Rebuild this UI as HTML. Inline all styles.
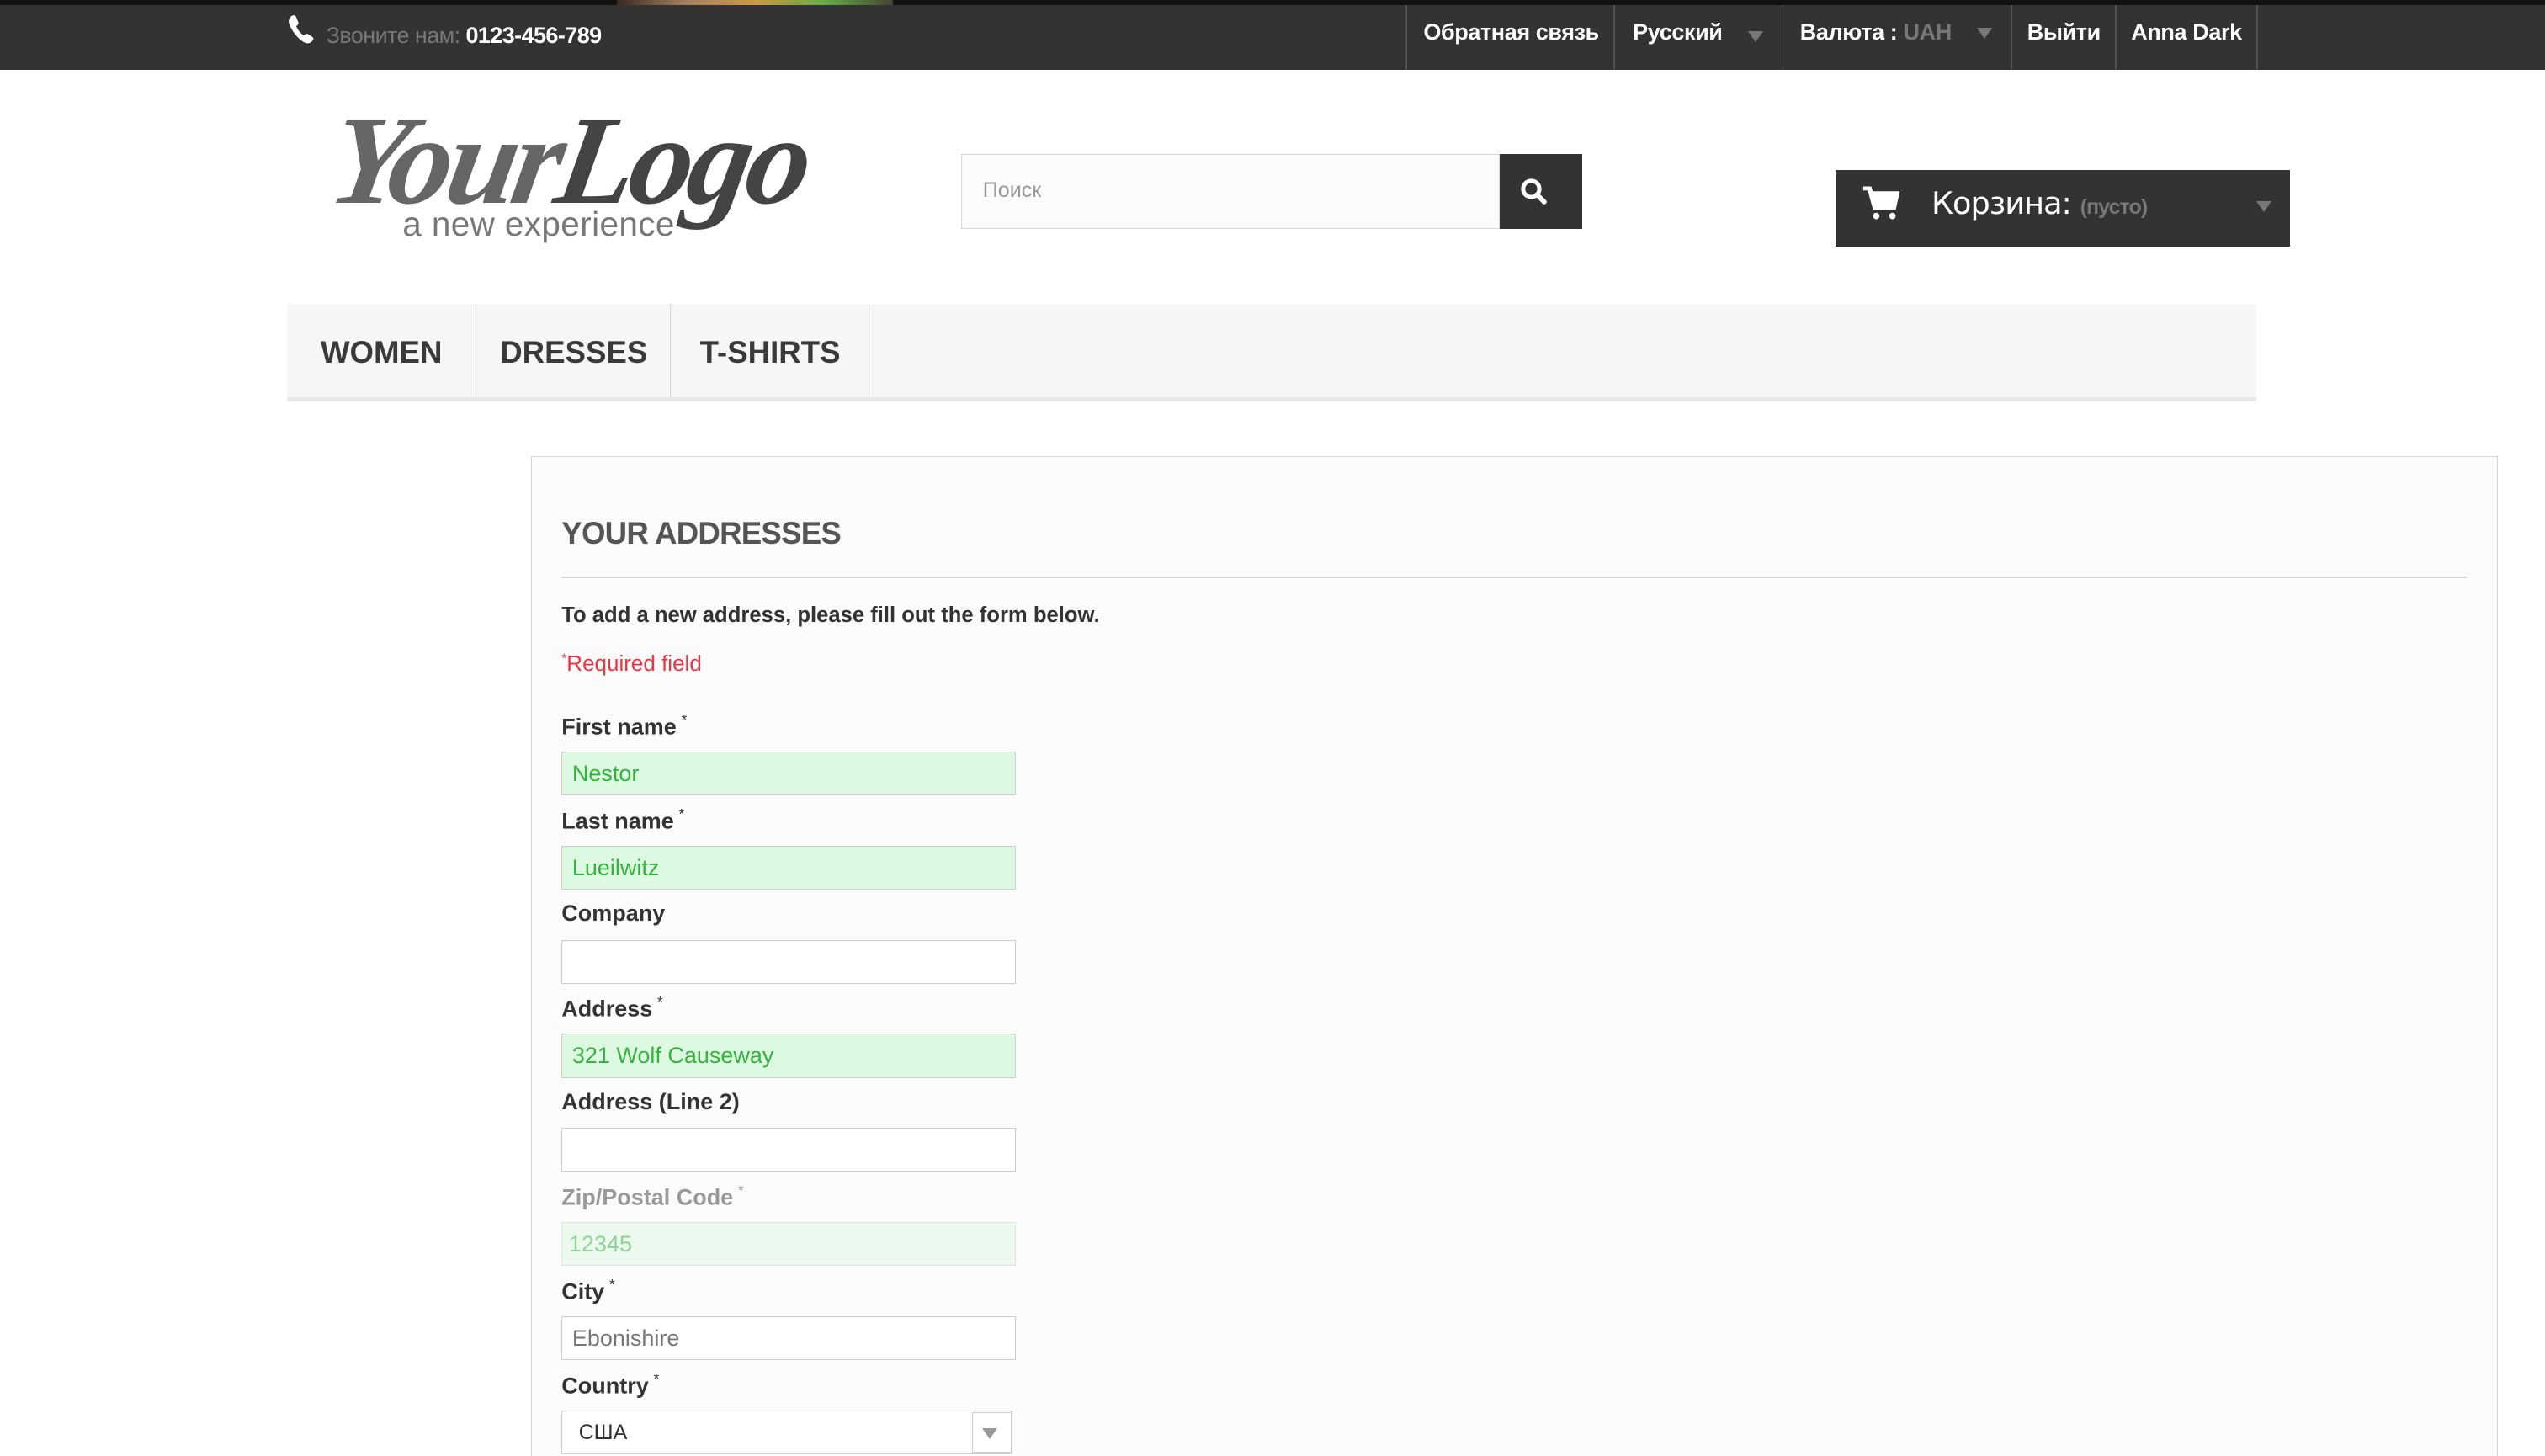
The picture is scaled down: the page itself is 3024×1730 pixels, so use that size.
<!DOCTYPE html>
<html><head><meta charset="utf-8"><style>
html,body{margin:0;padding:0;background:#fff;overflow:hidden;width:3024px;height:1730px}
#w{position:relative;width:1568px;height:897px;zoom:1.928571;font-family:"Liberation Sans",Arial,sans-serif;color:#333}
.a{position:absolute}
.top{left:0;top:0;width:1568px;height:43px;background:#333}
.blk{left:0;top:0;width:1568px;height:3px;background:#111}
.sep{top:3px;width:1px;height:40px;background:#515151}
.tl{top:12px;font-size:14px;font-weight:bold;color:#fff;white-space:nowrap;letter-spacing:-.2px}
.tri{width:0;height:0;border-left:5px solid transparent;border-right:5px solid transparent;border-top:7px solid #777}
.menu{left:177px;top:187px;width:1213px;height:58px;background:#f6f6f6;border-bottom:3px solid #e9e9e9}
.mi{top:187px;height:58px;line-height:60px;font-size:19px;color:#3a3a3a;font-weight:bold;text-align:center;border-right:1px solid #d6d4d4}
.panel{left:327px;top:281px;width:1211px;height:640px;background:#fbfbfb;border:1px solid #d6d4d4}
.lab{left:346px;font-size:14px;font-weight:bold;color:#333}
.lab sup{font-size:9px;font-weight:normal;vertical-align:6px;margin-left:3px}
.in{left:346px;height:26px;border:1px solid #ccc;background:#fff;font-size:14px;line-height:26px;padding-left:6px;box-sizing:content-box;width:273px}
.ok{background:#ddf9e1;color:#35b33f}
</style></head><body><div id="w">
<div class="a top"></div><div class="a blk"></div>
<div class="a" style="left:380px;top:0;width:170px;height:3px;background:linear-gradient(90deg,#3a2a20,#a08060,#c94,#6a4,#443)"></div>
<svg class="a" style="left:177px;top:9px" width="18" height="19" viewBox="0 0 18 19"><path d="M3 1c1.5-1 2.5 0 3 1.5l1 2.5c.3 1-.5 1.8-1.3 2.2 1 2.6 2.6 4.6 4.8 5.8.6-.7 1.5-1.3 2.4-.8l2.4 1.5c1.2.8 1.3 1.8.2 2.8-1.5 1.5-3.5 1.8-5.5.4C6 14.4 3 10 1.4 6 .6 3.8 1.5 2 3 1z" fill="#fff"/></svg>
<div class="a" style="left:201px;top:14px;font-size:14px;color:#777;white-space:nowrap;letter-spacing:-.3px">Звоните нам: <b style="color:#fff">0123-456-789</b></div>
<div class="a sep" style="left:866px"></div><div class="a sep" style="left:994px"></div><div class="a sep" style="left:1098px"></div><div class="a sep" style="left:1239px"></div><div class="a sep" style="left:1303px"></div><div class="a sep" style="left:1390px"></div>
<div class="a tl" style="left:877px">Обратная связь</div>
<div class="a tl" style="left:1006px">Русский</div><div class="a tri" style="left:1077px;top:19px"></div>
<div class="a tl" style="left:1109px">Валюта : <span style="color:#777">UAH</span></div><div class="a tri" style="left:1218px;top:17px"></div>
<div class="a tl" style="left:1249px">Выйти</div>
<div class="a tl" style="left:1313px">Anna Dark</div>
<div class="a" style="left:205px;top:54px;font-family:'Liberation Serif',serif;font-style:italic;font-weight:bold;font-size:78px;color:#666;letter-spacing:-3px;line-height:90px;transform:skewX(-10deg)">Your<span style="color:#444">Logo</span></div>
<div class="a" style="left:248px;top:126px;font-size:21px;color:#777;letter-spacing:.2px;line-height:24px;background:rgba(255,255,255,.0)">a new experience</div>
<div class="a" style="left:592px;top:95px;border:1px solid #d6d4d4;background:#fbfbfb;font-size:13px;color:#999;line-height:44px;padding-left:13px;box-sizing:border-box;width:332px;height:46px">Поиск</div>
<div class="a" style="left:924px;top:95px;width:51px;height:46px;background:#333"></div>
<svg class="a" style="left:936px;top:109px" width="18" height="18" viewBox="0 0 18 18"><circle cx="7.5" cy="7.5" r="5" fill="none" stroke="#fff" stroke-width="2.6"/><path d="M11 11l4.5 4.5" stroke="#fff" stroke-width="3" stroke-linecap="round"/></svg>
<div class="a" style="left:1131px;top:105px;width:280px;height:47px;background:#333"></div>
<svg class="a" style="left:1147px;top:114px" width="24" height="22" viewBox="0 0 24 22"><path d="M1 2h4l1 3h16l-2 9H8L5 3" fill="none" stroke="#fff" stroke-width="2.5"/><path d="M6 5h16l-2 9H8z" fill="#fff"/><circle cx="9" cy="19" r="2" fill="#fff"/><circle cx="19" cy="19" r="2" fill="#fff"/></svg>
<div class="a" style="left:1190px;top:114px;font-size:19px;color:#fff;font-family:'DejaVu Sans',sans-serif;white-space:nowrap;letter-spacing:-.5px">Корзина: <span style="font-size:13px;color:#777;font-family:'Liberation Sans',sans-serif;font-weight:bold">(пусто)</span></div>
<div class="a tri" style="left:1390px;top:124px;border-top-color:#777"></div>
<div class="a menu"></div>
<div class="a mi" style="left:177px;width:116px">WOMEN</div>
<div class="a mi" style="left:294px;width:119px">DRESSES</div>
<div class="a mi" style="left:414px;width:121px">T-SHIRTS</div>
<div class="a panel"></div>
<div class="a" style="left:346px;top:318px;font-size:19px;color:#555;font-weight:bold;letter-spacing:-.4px">YOUR ADDRESSES</div>
<div class="a" style="left:346px;top:355px;width:1174px;height:1px;background:#d6d4d4"></div>
<div class="a" style="left:346px;top:372px;font-size:13.3px;font-weight:bold;color:#333">To add a new address, please fill out the form below.</div>
<div class="a" style="left:346px;top:401px;font-size:13.5px;color:#f13340"><sup style="font-size:8px;vertical-align:5px">*</sup>Required field</div>
<div class="a lab" style="top:438px">First name<sup>*</sup></div>
<div class="a in ok" style="top:463px">Nestor</div>
<div class="a lab" style="top:496px">Last name<sup>*</sup></div>
<div class="a in ok" style="top:521px">Lueilwitz</div>
<div class="a lab" style="top:555px">Company</div>
<div class="a in" style="top:579px"></div>
<div class="a lab" style="top:612px">Address<sup>*</sup></div>
<div class="a in ok" style="top:637px">321 Wolf Causeway</div>
<div class="a lab" style="top:671px">Address (Line 2)</div>
<div class="a in" style="top:695px"></div>
<div class="a lab" style="top:728px;color:#999">Zip/Postal Code<sup>*</sup></div>
<div class="a in" style="top:753px;background:#ecf9ee;color:#8fd597;border-color:#e3e3e3;padding-left:4px;width:275px">12345</div>
<div class="a lab" style="top:786px">City<sup>*</sup></div>
<div class="a in" style="top:811px;color:#777">Ebonishire</div>
<div class="a lab" style="top:844px">Country<sup>*</sup></div>
<div class="a in" style="top:869px;width:267px;padding-left:10px;font-size:13px;color:#333">США</div>
<div class="a" style="left:599px;top:870px;width:23px;height:24px;border:1px solid #ccc;background:#fff"></div>
<div class="a tri" style="left:605px;top:880px;border-top-color:#999"></div>
</div></body></html>
